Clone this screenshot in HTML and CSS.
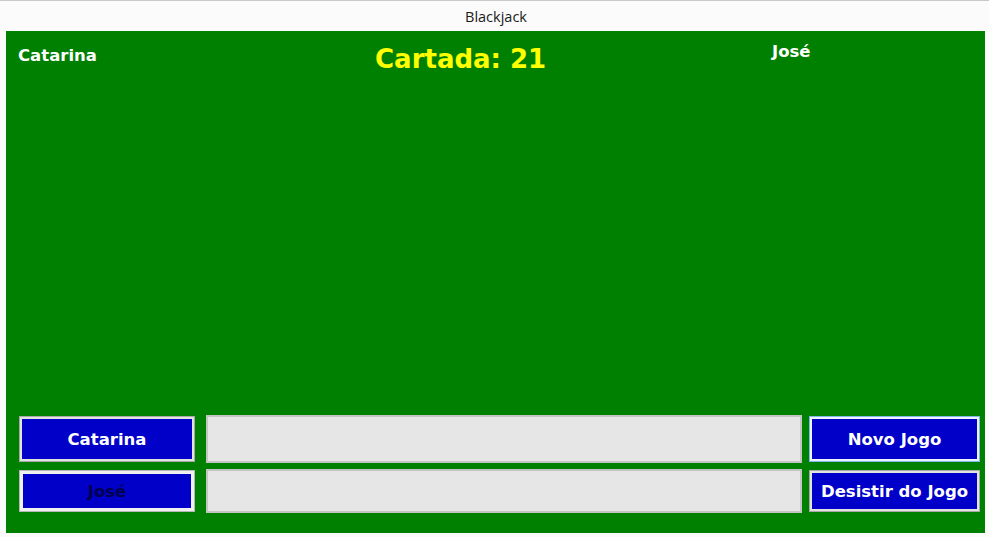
FILE: index.html
```html
<!DOCTYPE html>
<html lang="pt">
<head>
<meta charset="utf-8">
<title>Blackjack</title>
<link rel="stylesheet" href="styles.css">
</head>
<body>
<div class="window">
  <div class="titlebar">Blackjack</div>
  <div class="table">
    <div class="top">
      <div class="name name-left">Catarina</div>
      <div class="score">Cartada: 21</div>
      <div class="name name-right">José</div>
    </div>
    <div class="controls">
      <button class="btn btn-player">Catarina</button>
      <div class="field field-1"></div>
      <button class="btn btn-new">Novo Jogo</button>
      <button class="btn btn-player btn-off">José</button>
      <div class="field field-2"></div>
      <button class="btn btn-quit">Desistir do Jogo</button>
    </div>
  </div>
</div>
</body>
</html>
```
FILE: styles.css
```css
* { box-sizing: border-box; }
html, body { margin: 0; padding: 0; background: #ffffff; }
body { width: 989px; height: 537px; overflow: hidden; }
.window {
  width: 989px;
  height: 537px;
  display: flex;
  flex-direction: column;
  border-top: 1px solid #c8c8c8;
  background: #fbfbfb;
}
.titlebar {
  height: 30px;
  display: flex;
  align-items: center;
  justify-content: center;
  font-family: "Open Sans", "Noto Sans", sans-serif;
  font-size: 14.5px;
  color: #1a1a1a;
  padding-left: 3px;
  padding-top: 1px;
}
.table {
  margin: 0 4px 4px 6px;
  flex: 1;
  background: #008000;
  display: flex;
  flex-direction: column;
  justify-content: space-between;
  font-family: "Comic Sans MS", "DejaVu Sans", sans-serif;
  font-weight: bold;
}
.top {
  display: grid;
  grid-template-columns: 357px 397px 1fr;
  padding-left: 12px;
  align-items: start;
}
.name {
  color: #ffffff;
  font-size: 16.5px;
  line-height: 20px;
}
.name-left { margin-top: 15px; }
.name-right { margin-top: 11px; }
.score {
  color: #ffff00;
  font-size: 26px;
  line-height: 30px;
  margin-top: 13px;
}
.controls {
  display: grid;
  grid-template-columns: 176px 607px 178px;
  grid-template-rows: 48px 44px;
  row-gap: 6px;
  padding: 0 5px 20px 13px;
}
.controls > :nth-child(3n+2) { margin-left: 11px; }
.controls > :nth-child(3n) { margin-left: 7px; }
.btn {
  margin: 1px 0;
  background: #0000c8;
  color: #ffffff;
  font-family: "Comic Sans MS", "DejaVu Sans", sans-serif;
  font-weight: bold;
  font-size: 16.5px;
  border: 1px solid #a9a9a9;
  box-shadow: inset 0 0 0 2px #e3e3e3;
  padding: 0;
  cursor: default;
}
.btn-off {
  color: #00004e;
  border-color: #b8b8b8;
  box-shadow: inset 0 0 0 3px #f0f0f0;
}
.btn-new {
  border-color: #80b8ee;
  box-shadow: inset 0 0 0 2px #eef4fb;
}
.field {
  background: #e6e6e6;
  border: 2px solid #c4c4c4;
}
```
